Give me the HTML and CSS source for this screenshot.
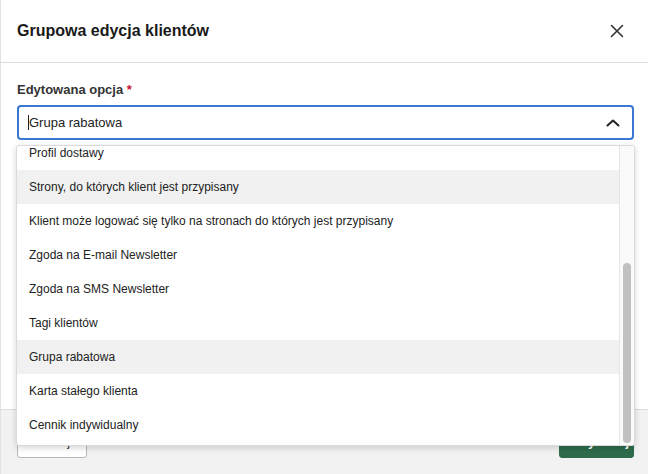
FILE: index.html
```html
<!DOCTYPE html>
<html lang="pl">
<head>
<meta charset="utf-8">
<title>Grupowa edycja klientów</title>
<link rel="stylesheet" href="styles.css">
</head>
<body>
<div class="modal">
  <header class="modal-header">
    <h1 class="modal-title">Grupowa edycja klientów</h1>
    <button class="close-btn" aria-label="Zamknij">
      <svg width="14" height="14" viewBox="0 0 14 14"><path d="M1.5 1.5 L12.5 12.5 M12.5 1.5 L1.5 12.5" stroke="#333" stroke-width="1.6" stroke-linecap="round" fill="none"/></svg>
    </button>
  </header>
  <main class="modal-body">
    <label class="field-label">Edytowana opcja <span class="req">*</span></label>
    <div class="select">
      <span class="caret"></span><span class="select-value">Grupa rabatowa</span>
      <svg class="chevron" width="14" height="8" viewBox="0 0 14 8"><path d="M1.5 6.5 L7 1.5 L12.5 6.5" stroke="#222" stroke-width="2" fill="none" stroke-linecap="round" stroke-linejoin="round"/></svg>
    </div>
  </main>
  <footer class="modal-footer">
    <button class="btn btn-secondary">Anuluj</button>
    <button class="btn btn-primary">Wykonaj</button>
  </footer>

  <div class="dropdown">
    <div class="dropdown-list">
      <ul class="options">
        <li class="option">Profil dostawy</li>
        <li class="option is-hover">Strony, do których klient jest przypisany</li>
        <li class="option">Klient może logować się tylko na stronach do których jest przypisany</li>
        <li class="option">Zgoda na E-mail Newsletter</li>
        <li class="option">Zgoda na SMS Newsletter</li>
        <li class="option">Tagi klientów</li>
        <li class="option is-selected">Grupa rabatowa</li>
        <li class="option">Karta stałego klienta</li>
        <li class="option">Cennik indywidualny</li>
      </ul>
    </div>
    <div class="scrollbar"><div class="thumb"></div></div>
  </div>
</div>
</body>
</html>
```

FILE: styles.css
```css
* { box-sizing: border-box; }
html, body { margin: 0; padding: 0; }
body {
  width: 648px;
  height: 474px;
  overflow: hidden;
  background: #fff;
  font-family: "Liberation Sans", Arial, Helvetica, sans-serif;
  color: #222;
}
.modal {
  position: relative;
  width: 648px;
  height: 474px;
  display: flex;
  flex-direction: column;
  border-left: 1px solid #e2e2e2;
}
.modal-header {
  height: 63px;
  border-bottom: 1px solid #dcdcdc;
  display: flex;
  align-items: center;
  justify-content: space-between;
  padding: 0 24px 0 16px;
}
.modal-title {
  margin: 0;
  font-size: 16px;
  font-weight: bold;
  color: #1a1a1a;
  line-height: 20px;
}
.close-btn {
  border: 0;
  background: none;
  padding: 0;
  width: 14px;
  height: 14px;
  display: flex;
}
.modal-body {
  flex: 1;
  padding: 19px 14px 0 16px;
  display: flex;
  flex-direction: column;
}
.field-label {
  font-size: 13px;
  font-weight: bold;
  line-height: 16px;
  color: #333;
  margin-bottom: 7px;
}
.req { color: #c8102e; }
.select {
  height: 35px;
  border: 2px solid #3b78d4;
  border-radius: 4px;
  display: flex;
  align-items: center;
  padding: 0 12px 0 9px;
  font-size: 13px;
  color: #222;
}
.caret {
  width: 1px;
  height: 15px;
  background: #222;
}
.select-value { flex: 1; }
.chevron { margin-top: 1px; }
.modal-footer {
  height: 65px;
  background: #f2f2f2;
  border-top: 1px solid #dcdcdc;
  display: flex;
  justify-content: space-between;
  align-items: flex-start;
  padding: 14px 14px 0 16px;
}
.btn {
  height: 34px;
  font-family: inherit;
  font-size: 13px;
  border-radius: 3px;
  padding: 0 16px;
}
.btn-secondary {
  width: 70px;
  background: #fff;
  border: 1px solid #b9b9b9;
  color: #333;
}
.btn-primary {
  width: 75px;
  background: #2e6b4b;
  border: 1px solid #2e6b4b;
  color: #fff;
  font-weight: bold;
}
.dropdown {
  position: absolute;
  top: 145px;
  left: 15px;
  width: 619px;
  height: 301px;
  background: #fff;
  border: 1px solid #dadada;
  border-radius: 3px;
  box-shadow: 0 2px 6px rgba(0, 0, 0, 0.16);
  display: flex;
  overflow: hidden;
}
.dropdown-list {
  flex: 1;
  overflow: hidden;
}
.options {
  list-style: none;
  margin: -10px 0 0 0;
  padding: 0;
}
.option {
  height: 34px;
  display: flex;
  align-items: center;
  padding-left: 12px;
  font-size: 12px;
  color: #222;
}
.option.is-hover,
.option.is-selected { background: #f1f1f1; }
.scrollbar {
  width: 15px;
  background: #fafafa;
  border-left: 1px solid #e6e6e6;
  display: flex;
  flex-direction: column;
  padding: 117px 3px 2px 3px;
}
.thumb {
  flex: 1;
  background: #c1c1c1;
  border-radius: 4px;
}
```
